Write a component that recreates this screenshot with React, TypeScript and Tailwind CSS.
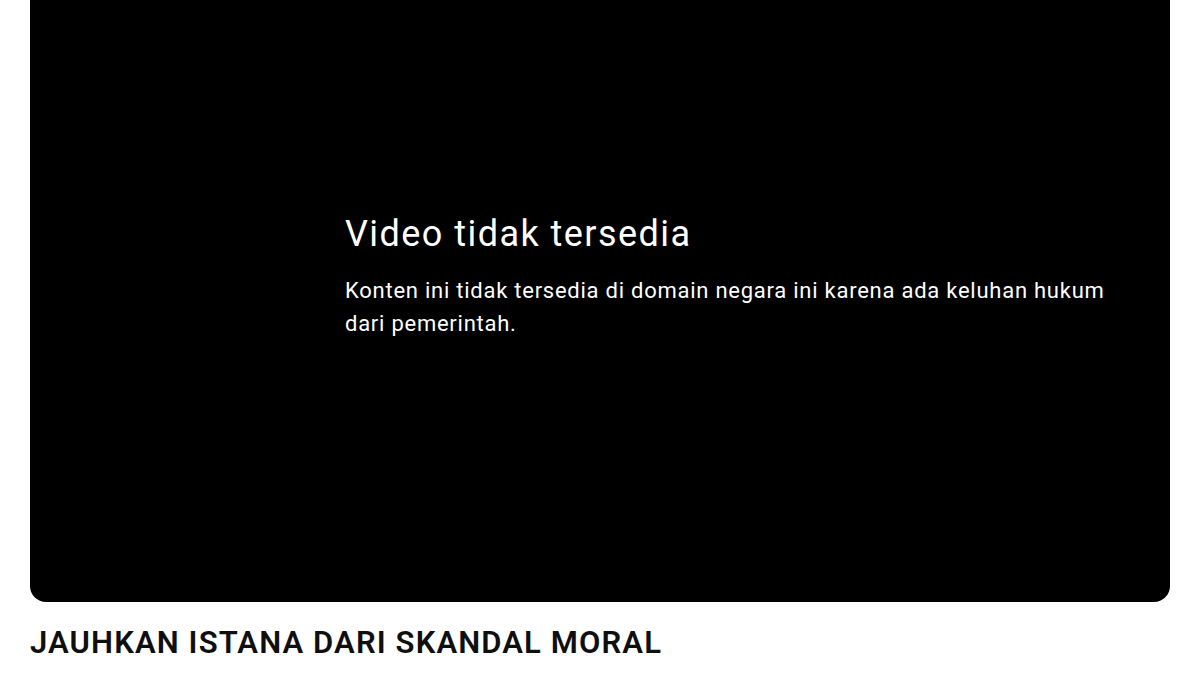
import React from "react";

export default function App() {
  return (
    <div className="w-[1200px] h-[675px] bg-white overflow-hidden" style={{ fontFamily: "Roboto, 'Noto Sans', sans-serif" }}>
      <div className="mx-[30px] h-[602px] bg-black rounded-b-[16px] pt-[210px]">
        <div className="ml-[315px] w-[790px]">
          <div className="text-white text-[36px] leading-[48px] tracking-[1.45px]">Video tidak tersedia</div>
          <div className="mt-[16px] text-white text-[22px] leading-[33px] tracking-[0.75px]">
            Konten ini tidak tersedia di domain negara ini karena ada keluhan hukum dari pemerintah.
          </div>
        </div>
      </div>
      <div className="px-[30px] pt-[21px] text-[31px] leading-[40px] font-semibold tracking-[1.12px] text-[#0f0f0f]">
        JAUHKAN ISTANA DARI SKANDAL MORAL
      </div>
    </div>
  );
}
